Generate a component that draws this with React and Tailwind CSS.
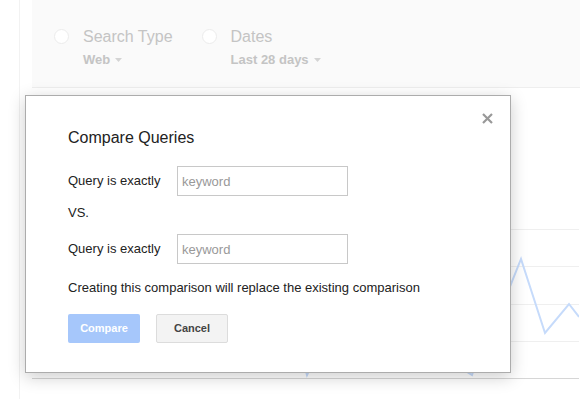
import { useState } from 'react';

const font = { fontFamily: '"Liberation Sans", Arial, sans-serif' };

const Filter = ({ title, value }) => (
  <div className="flex items-start gap-[14px]">
    <div className="mt-[1px] h-[15px] w-[15px] rounded-full border border-[#ececec] bg-white" />
    <div className="flex flex-col">
      <span className="text-[16px] leading-[18px] text-[#c4c4c4]">{title}</span>
      <span className="mt-[6px] flex items-center gap-[5px] text-[13px] font-bold leading-[15px] text-[#c4c4c4]">
        {value}
        <svg width="7" height="4" viewBox="0 0 7 4">
          <path d="M0 0h7L3.5 4z" fill="#d4d4d4" />
        </svg>
      </span>
    </div>
  </div>
);

const QueryRow = ({ value, onChange }) => (
  <div className="flex items-center">
    <span className="w-[109px] text-[13px] text-[#222]">Query is exactly</span>
    <input
      value={value}
      onChange={(e) => onChange(e.target.value)}
      placeholder="keyword"
      className="h-[30px] w-[171px] border border-[#c8c8c8] bg-white px-[4px] text-[13px] text-[#222] outline-none placeholder:text-[#999]"
    />
  </div>
);

export default function App() {
  const [first, setFirst] = useState('');
  const [second, setSecond] = useState('');

  return (
    <div className="relative flex h-[399px] w-[580px] overflow-hidden bg-white" style={font}>
      {/* left rail */}
      <div className="w-[20px] shrink-0 border-r border-[#f2f2f2]" />

      {/* main */}
      <div className="flex flex-1 flex-col pl-[12px]">
        <div className="flex h-[88px] gap-[29px] border-b border-[#eeeeee] bg-[#fafafa] pl-[22px] pt-[28px]">
          <Filter title="Search Type" value="Web" />
          <Filter title="Dates" value="Last 28 days" />
        </div>

        {/* chart */}
        <div className="relative flex-1">
          <svg width="547" height="310" viewBox="0 0 547 310" className="block">
            {[141, 178, 216, 253].map((y) => (
              <line key={y} x1="0" x2="547" y1={y + 0.5} y2={y + 0.5} stroke="#efefef" />
            ))}
            <line x1="0" x2="547" y1="290.5" y2="290.5" stroke="#d6d6d6" />
            <polyline
              points="260,230 275,287 290,255 330,262 380,250 440,287 455,240 477,201 489,171 513,245 537,216 547,229"
              fill="none"
              stroke="#c6dbfb"
              strokeWidth="2"
            />
          </svg>
        </div>
      </div>

      {/* dialog */}
      <div className="absolute left-[25px] top-[95px] flex h-[278px] w-[486px] flex-col border border-[#acacac] bg-white pl-[42px] pt-[32px] shadow-[0_4px_16px_rgba(0,0,0,0.2)]">
        <button className="absolute right-[17px] top-[17px] p-0">
          <svg width="11" height="11" viewBox="0 0 11 11">
            <path d="M1 1l9 9M10 1l-9 9" stroke="#999" strokeWidth="2.2" />
          </svg>
        </button>

        <h2 className="text-[16px] leading-[19px] text-[#222]">Compare Queries</h2>

        <div className="mt-[19px]">
          <QueryRow value={first} onChange={setFirst} />
        </div>

        <div className="mt-[9px] text-[13px] leading-[16px] text-[#222]">VS.</div>

        <div className="mt-[13px]">
          <QueryRow value={second} onChange={setSecond} />
        </div>

        <p className="mt-[16px] text-[13px] leading-[16px] text-[#222]">
          Creating this comparison will replace the existing comparison
        </p>

        <div className="mt-[18px] flex gap-[16px]">
          <button
            disabled
            className="h-[29px] w-[72px] rounded-[2px] bg-[#a6c7fb] text-[11px] font-bold text-white"
          >
            Compare
          </button>
          <button className="h-[29px] w-[72px] rounded-[2px] border border-[#dcdcdc] bg-[#f3f3f3] text-[11px] font-bold text-[#444]">
            Cancel
          </button>
        </div>
      </div>
    </div>
  );
}
